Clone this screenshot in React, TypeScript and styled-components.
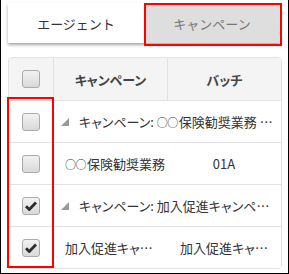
import React from "react";
import styled, { createGlobalStyle } from "styled-components";

const Global = createGlobalStyle`
  html, body { margin: 0; padding: 0; background: #fff; }
  body { font-family: "Noto Sans CJK JP", "Noto Sans", sans-serif; }
`;

const Frame = styled.div`
  position: relative;
  box-sizing: border-box;
  width: 289px;
  height: 274px;
  border: 1px solid #000;
  border-top: none;
  padding: 3px 7px 0 7px;
  background: #fff;
`;

const TabBar = styled.div`
  display: flex;
  height: 40px;
  box-shadow: 0 2px 3px rgba(0, 0, 0, 0.35);
  margin-right: 1px;
`;

const Tab = styled.div<{ $active?: boolean }>`
  flex: 1;
  display: flex;
  align-items: center;
  justify-content: center;
  font-size: 13px;
  color: ${(p) => (p.$active ? "#333" : "#777")};
  background: ${(p) => (p.$active ? "#fff" : "#dedede")};
`;

const RedBox = styled.div`
  position: absolute;
  box-sizing: border-box;
  border: 2px solid #f00;
  pointer-events: none;
`;

const Table = styled.div`
  margin-top: 14px;
  border: 1px solid #e2e2e2;
  border-radius: 4px;
  overflow: hidden;
  width: 274px;
  box-sizing: border-box;
`;

const Row = styled.div<{ $header?: boolean }>`
  display: grid;
  grid-template-columns: 44px 114px 1fr;
  height: 42px;
  box-sizing: border-box;
  background: ${(p) => (p.$header ? "#f4f4f4" : "#fff")};
  border-top: ${(p) => (p.$header ? "none" : "1px solid #e2e2e2")};
  font-size: 13px;
  color: #333;
  font-feature-settings: "palt";
`;

const Cell = styled.div<{ $center?: boolean; $divider?: boolean }>`
  display: flex;
  align-items: center;
  justify-content: ${(p) => (p.$center ? "center" : "flex-start")};
  min-width: 0;
  padding: ${(p) => (p.$center ? "0 4px 0 4px" : "0 2px 0 12px")};
  border-left: ${(p) => (p.$divider ? "1px solid #e2e2e2" : "none")};
  overflow: hidden;
  white-space: nowrap;
`;

const CheckCell = styled.div`
  display: flex;
  align-items: center;
  justify-content: center;
`;

const HeadText = styled.span`
  font-weight: bold;
  color: #444;
`;

const Marks = styled.span`
  font-size: 11px;
  letter-spacing: -0.5px;
  margin-right: 1px;
`;

const GroupCell = styled.div`
  grid-column: 2 / 4;
  display: flex;
  align-items: center;
  gap: 10px;
  padding: 0 6px 0 8px;
  min-width: 0;
  overflow: hidden;
  white-space: nowrap;
`;

const Triangle = styled.span`
  width: 0;
  height: 0;
  flex: none;
  margin-top: 1px;
  border-left: 8px solid transparent;
  border-bottom: 8px solid #999;
`;

const Box = styled.span`
  box-sizing: border-box;
  width: 18px;
  height: 18px;
  border: 1px solid #aaa;
  border-radius: 3px;
  background: linear-gradient(#f2f2f2, #d9d9d9);
  display: flex;
  align-items: center;
  justify-content: center;
`;

const Check: React.FC<{ checked?: boolean }> = ({ checked }) => (
  <Box>
    {checked && (
      <svg width="12" height="10" viewBox="0 0 12 10">
        <path d="M1 5.2 L4.3 8.5 L11 1.6" fill="none" stroke="#2e2e2e" strokeWidth="2.8" strokeLinejoin="miter" />
      </svg>
    )}
  </Box>
);

export default function App() {
  return (
    <>
      <Global />
      <Frame>
        <TabBar>
          <Tab $active>エージェント</Tab>
          <Tab>キャンペーン</Tab>
        </TabBar>
        <RedBox style={{ left: 143, top: 3, width: 138, height: 43 }} />
        <Table>
          <Row $header>
            <CheckCell><Check /></CheckCell>
            <Cell $center $divider><HeadText>キャンペーン</HeadText></Cell>
            <Cell $center $divider><HeadText>バッチ</HeadText></Cell>
          </Row>
          <Row>
            <CheckCell><Check /></CheckCell>
            <GroupCell><Triangle /><span>キャンペーン: <Marks>○○</Marks>保険勧奨業務 …</span></GroupCell>
          </Row>
          <Row>
            <CheckCell><Check /></CheckCell>
            <Cell><span><Marks>○○</Marks>保険勧奨業務</span></Cell>
            <Cell $center>01A</Cell>
          </Row>
          <Row>
            <CheckCell><Check checked /></CheckCell>
            <GroupCell><Triangle /><span>キャンペーン: 加入促進キャンペ…</span></GroupCell>
          </Row>
          <Row>
            <CheckCell><Check checked /></CheckCell>
            <Cell>加入促進キャ…</Cell>
            <Cell $center>加入促進キャ…</Cell>
          </Row>
        </Table>
        <RedBox style={{ left: 6, top: 97, width: 47, height: 171 }} />
      </Frame>
    </>
  );
}
